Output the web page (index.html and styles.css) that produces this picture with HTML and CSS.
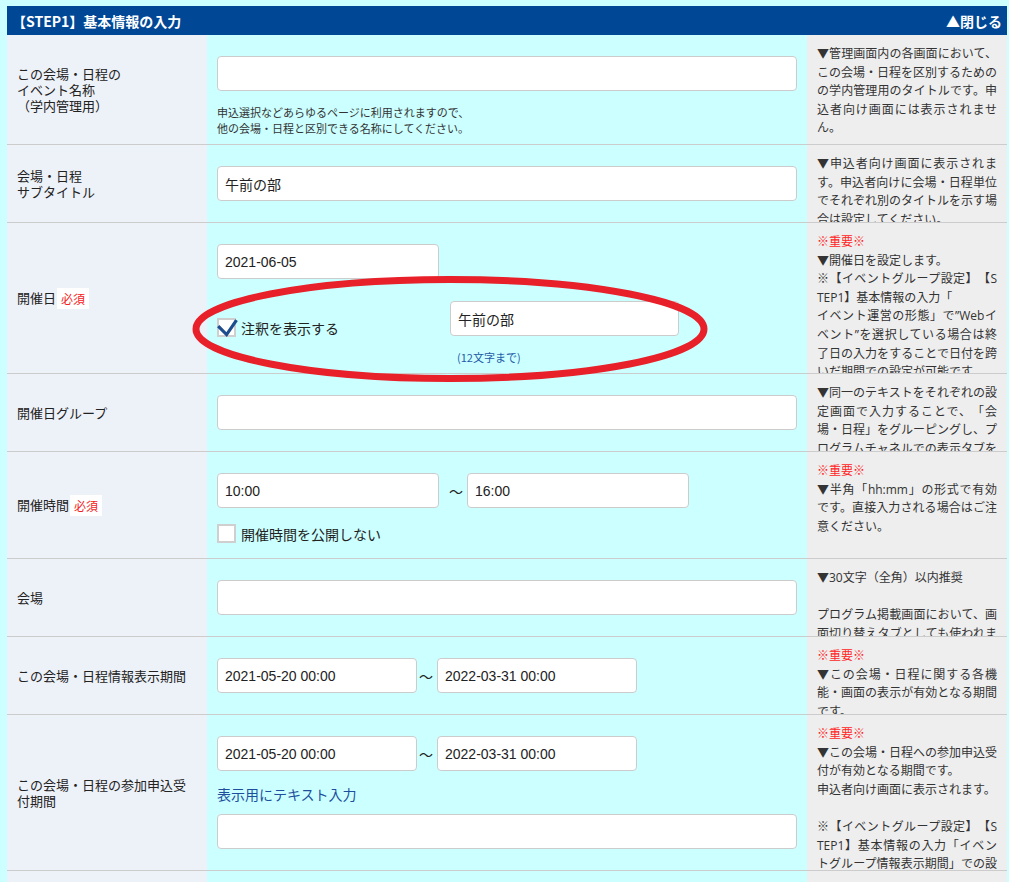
FILE: index.html
```html
<!DOCTYPE html>
<html lang="ja">
<head>
    <meta charset="UTF-8">
    <meta name="viewport" content="width=device-width, initial-scale=1.0">
    <title>会場・日程設定</title>
    <link rel="stylesheet" href="styles.css">
</head>
<body>
    <div class="panel">
        <div class="panel-head">
            <span>【STEP1】基本情報の入力</span>
            <span class="toggle">▲閉じる</span>
        </div>

        <div class="row">
            <div class="row-label">この会場・日程の<br>イベント名称<br>（学内管理用）</div>
            <div class="row-field">
                <input type="text" class="text-input full line">
                <p class="help">申込選択などあらゆるページに利用されますので、<br>他の会場・日程と区別できる名称にしてください。</p>
            </div>
            <div class="row-note">▼管理画面内の各画面において、この会場・日程を区別するためのの学内管理用のタイトルです。申込者向け画面には表示されません。</div>
        </div>

        <div class="row">
            <div class="row-label">会場・日程<br>サブタイトル</div>
            <div class="row-field">
                <input type="text" class="text-input full line" value="午前の部">
            </div>
            <div class="row-note">▼申込者向け画面に表示されます。申込者向けに会場・日程単位でそれぞれ別のタイトルを示す場合は設定してください。</div>
        </div>

        <div class="row">
            <div class="row-label">開催日<span class="req">必須</span></div>
            <div class="row-field">
                <input type="text" class="text-input w222 line" value="2021-06-05">
                <div class="memo-line">
                    <label class="check memo-check">
                        <span class="box">
                            <svg width="15" height="15" viewBox="0 0 15 15"><path d="M-0.8 6.2 L7.6 14.6 L17.5 0.2" fill="none" stroke="#1d4d8e" stroke-width="3.2"/></svg>
                        </span>
                        注釈を表示する
                    </label>
                    <div class="memo-group">
                        <input type="text" class="text-input w229 line" value="午前の部">
                        <p class="hint">(12文字まで)</p>
                    </div>
                </div>
                <svg class="mark" width="516" height="106" viewBox="0 0 516 106">
                    <ellipse cx="258" cy="53" rx="254" ry="49.5" fill="none" stroke="#e8202a" stroke-width="7"/>
                </svg>
            </div>
            <div class="row-note"><span class="important">※重要※</span><br>▼開催日を設定します。<br>※【イベントグループ設定】【STEP1】基本情報の入力「<br>イベント運営の形態」で”Webイベント”を選択している場合は終了日の入力をすることで日付を跨いだ期間での設定が可能です。</div>
        </div>

        <div class="row">
            <div class="row-label">開催日グループ</div>
            <div class="row-field">
                <input type="text" class="text-input full line">
            </div>
            <div class="row-note">▼同一のテキストをそれぞれの設定画面で入力することで、「会場・日程」をグルーピングし、プログラムチャネルでの表示タブをまとめることができます。</div>
        </div>

        <div class="row">
            <div class="row-label">開催時間<span class="req">必須</span></div>
            <div class="row-field">
                <div class="range line">
                    <input type="text" class="text-input w222" value="10:00">
                    <span class="tilde">〜</span>
                    <input type="text" class="text-input w222" value="16:00">
                </div>
                <label class="check">
                    <span class="box"></span>
                    開催時間を公開しない
                </label>
            </div>
            <div class="row-note"><span class="important">※重要※</span><br>▼半角「hh:mm」の形式で有効です。直接入力される場合はご注意ください。</div>
        </div>

        <div class="row">
            <div class="row-label">会場</div>
            <div class="row-field">
                <input type="text" class="text-input full line">
            </div>
            <div class="row-note">▼30文字（全角）以内推奨<br><br>プログラム掲載画面において、画面切り替えタブとしても使われます。</div>
        </div>

        <div class="row">
            <div class="row-label">この会場・日程情報表示期間</div>
            <div class="row-field">
                <div class="range line">
                    <input type="text" class="text-input w200" value="2021-05-20 00:00">
                    <span class="tilde tight">〜</span>
                    <input type="text" class="text-input w200" value="2022-03-31 00:00">
                </div>
            </div>
            <div class="row-note"><span class="important">※重要※</span><br>▼この会場・日程に関する各機能・画面の表示が有効となる期間です。</div>
        </div>

        <div class="row">
            <div class="row-label">この会場・日程の参加申込受付期間</div>
            <div class="row-field">
                <div class="range line">
                    <input type="text" class="text-input w200" value="2021-05-20 00:00">
                    <span class="tilde tight">〜</span>
                    <input type="text" class="text-input w200" value="2022-03-31 00:00">
                </div>
                <p class="sub-link">表示用にテキスト入力</p>
                <input type="text" class="text-input full line">
            </div>
            <div class="row-note"><span class="important">※重要※</span><br>▼この会場・日程への参加申込受付が有効となる期間です。<br>申込者向け画面に表示されます。<br><br>※【イベントグループ設定】【STEP1】基本情報の入力「イベントグループ情報表示期間」での設定期間内で設定してください。</div>
        </div>

        <div class="row">
            <div class="row-label">定員</div>
            <div class="row-field">
                <input type="text" class="text-input w222 line">
            </div>
            <div class="row-note"></div>
        </div>
    </div>
</body>
</html>
```

FILE: styles.css
```css
html,
body {
    margin: 0;
}
body {
    padding: 6px 0 0 7px;
    background-color: #ccffff;
    font-family: "Noto Sans CJK JP", sans-serif;
    color: #222;
    text-spacing-trim: space-all;
}
.panel {
    width: 1000px;
}
.panel-head {
    display: flex;
    justify-content: space-between;
    align-items: center;
    height: 29px;
    padding: 0 5px;
    background-color: #004896;
    color: #fff;
    font-size: 14px;
    font-weight: bold;
}
.row {
    display: grid;
    grid-template-columns: 200px 600px 200px;
    border-bottom: 1px solid #ccc;
}
.row-label {
    display: flex;
    align-items: center;
    flex-wrap: wrap;
    padding: 0 20px 0 10px;
    background-color: #edf1f8;
    font-size: 13px;
    line-height: 16px;
}
.req {
    margin-left: 1px;
    padding: 2px 4px;
    background-color: #fff;
    color: #f52222;
    font-size: 12px;
    line-height: 17px;
}
.row-field {
    position: relative;
    padding: 21px 10px 8px;
}
.row-note {
    contain: size;
    overflow: hidden;
    padding: 10px;
    background-color: #eee;
    color: #333;
    font-family: "Open Sans", "Noto Sans CJK JP", sans-serif;
    font-size: 12px;
    line-height: 18.6px;
    text-align: justify;
    word-break: break-all;
}
.important {
    color: #ff2424;
}
.text-input {
    display: block;
    box-sizing: border-box;
    height: 35px;
    margin: 0;
    padding: 0 7px;
    border: 1px solid #ccc;
    border-radius: 4px;
    background-color: #fff;
    color: #222;
    font-family: "Liberation Sans", "Noto Sans CJK JP", sans-serif;
    font-size: 14px;
}
.line {
    margin-bottom: 13px;
}
.full {
    width: 100%;
}
.w200 {
    width: 200px;
}
.w222 {
    width: 222px;
}
.w229 {
    width: 229px;
}
.help {
    margin: 0;
    font-size: 11px;
    line-height: 16px;
    color: #333;
}
.hint {
    margin: 0;
    padding-left: 7px;
    font-size: 11px;
    line-height: 16px;
    color: #1f5ba8;
}
.range {
    display: flex;
    align-items: center;
}
.tilde {
    margin: 0 4px 0 10px;
    font-size: 14px;
}
.tilde.tight {
    margin-left: 2px;
}
.check {
    display: flex;
    align-items: center;
    gap: 5px;
    height: 25px;
    margin-bottom: 4px;
    font-size: 14px;
    color: #222;
}
.box {
    display: block;
    box-sizing: border-box;
    width: 19px;
    height: 19px;
    border: 2px solid #cfcfcf;
    background-color: #fff;
}
.box svg {
    display: block;
    overflow: visible;
}
.memo-line {
    display: flex;
    align-items: flex-start;
    padding-top: 9px;
}
.memo-check {
    width: 233px;
    margin: 14px 0 0;
}
.sub-link {
    margin: 0 0 10px;
    font-size: 14px;
    line-height: 20px;
    color: #1d4f9c;
}
.mark {
    position: absolute;
    left: -15px;
    top: 53px;
    z-index: 2;
    pointer-events: none;
}
```
